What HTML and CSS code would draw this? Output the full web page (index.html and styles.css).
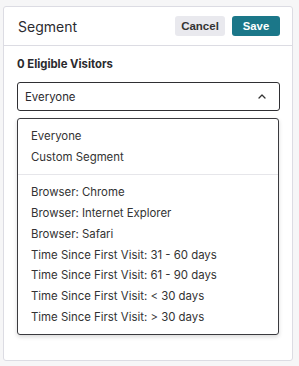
FILE: index.html
```html
<!DOCTYPE html>
<html lang="en">
<head>
    <meta charset="UTF-8">
    <meta name="viewport" content="width=device-width, initial-scale=1.0">
    <title>Segment</title>
    <link rel="stylesheet" href="styles.css">
</head>
<body>
    <div class="panel">
        <header class="panel-header">
            <h1>Segment</h1>
            <div class="actions">
                <button class="btn btn-cancel">Cancel</button>
                <button class="btn btn-save">Save</button>
            </div>
        </header>

        <div class="panel-body">
            <p class="eligible">0 Eligible Visitors</p>

            <!-- Select with its menu open -->
            <div class="select">
                <span>Everyone</span>
                <svg class="chevron" width="8" height="5" viewBox="0 0 8 5">
                    <path d="M1 4 L4 1 L7 4" fill="none" stroke="#333" stroke-width="1.3" stroke-linecap="round" stroke-linejoin="round"/>
                </svg>
            </div>

            <ul class="menu">
                <li class="group">
                    <ul>
                        <li>Everyone</li>
                        <li>Custom Segment</li>
                    </ul>
                </li>
                <li class="group">
                    <ul>
                        <li>Browser: Chrome</li>
                        <li>Browser: Internet Explorer</li>
                        <li>Browser: Safari</li>
                        <li>Time Since First Visit: 31 - 60 days</li>
                        <li>Time Since First Visit: 61 - 90 days</li>
                        <li>Time Since First Visit: &lt; 30 days</li>
                        <li>Time Since First Visit: &gt; 30 days</li>
                    </ul>
                </li>
            </ul>
        </div>
    </div>
</body>
</html>
```

FILE: styles.css
```css
body {
    font-family: Inter, "Noto Sans", Arial, sans-serif;
    background-color: #f6f6f7;
    margin: 0;
    padding: 6px 6px 5px 3px;
    color: #2a2a2e;
}

.panel {
    background-color: #fff;
    border: 1px solid #dcdce3;
    border-radius: 3px;
    box-sizing: border-box;
    height: 355px;
}

.panel-header {
    display: flex;
    align-items: center;
    justify-content: space-between;
    height: 38px;
    padding: 0 12px 0 14px;
    border-bottom: 1px solid #dcdce3;
}

.panel-header h1 {
    margin: 0;
    font-size: 14px;
    font-weight: 400;
    color: #2b2b30;
}

.actions {
    display: flex;
    gap: 7px;
}

.btn {
    font-family: "Liberation Sans", Arial, sans-serif;
    font-weight: 700;
    height: 20px;
    border: none;
    border-radius: 3px;
    padding: 0;
    cursor: pointer;
}

.btn-cancel {
    background-color: #e9e9ee;
    color: #333;
    font-size: 11.5px;
    width: 50px;
}

.btn-save {
    background-color: #1b7789;
    color: #fff;
    font-size: 11.3px;
    width: 48px;
}

.panel-body {
    padding: 0 12px 0 13px;
}

.eligible {
    margin: 0;
    box-sizing: border-box;
    padding-top: 10px;
    font-size: 11.3px;
    font-weight: 700;
    line-height: 16px;
    height: 36px;
}

.select {
    display: flex;
    align-items: center;
    justify-content: space-between;
    height: 29px;
    box-sizing: border-box;
    border: 1px solid #2f2f33;
    border-radius: 3px;
    padding: 0 13px 0 7px;
    font-size: 11.4px;
}

.chevron {
    display: block;
}

.menu {
    list-style: none;
    margin: 7px 1px 0 0;
    padding: 0;
    border: 1px solid #3a3a3e;
    border-radius: 3px;
    box-shadow: 0 2px 4px rgba(0, 0, 0, 0.15);
    font-size: 11.4px;
    color: #333;
}

.menu ul {
    list-style: none;
    margin: 0;
    padding: 0;
}

.group {
    padding: 7px 0;
}

.group + .group {
    border-top: 1px solid #e6e6ea;
    padding: 7px 0;
}

.group li {
    line-height: 20.7px;
    padding: 0 13px;
}
```
